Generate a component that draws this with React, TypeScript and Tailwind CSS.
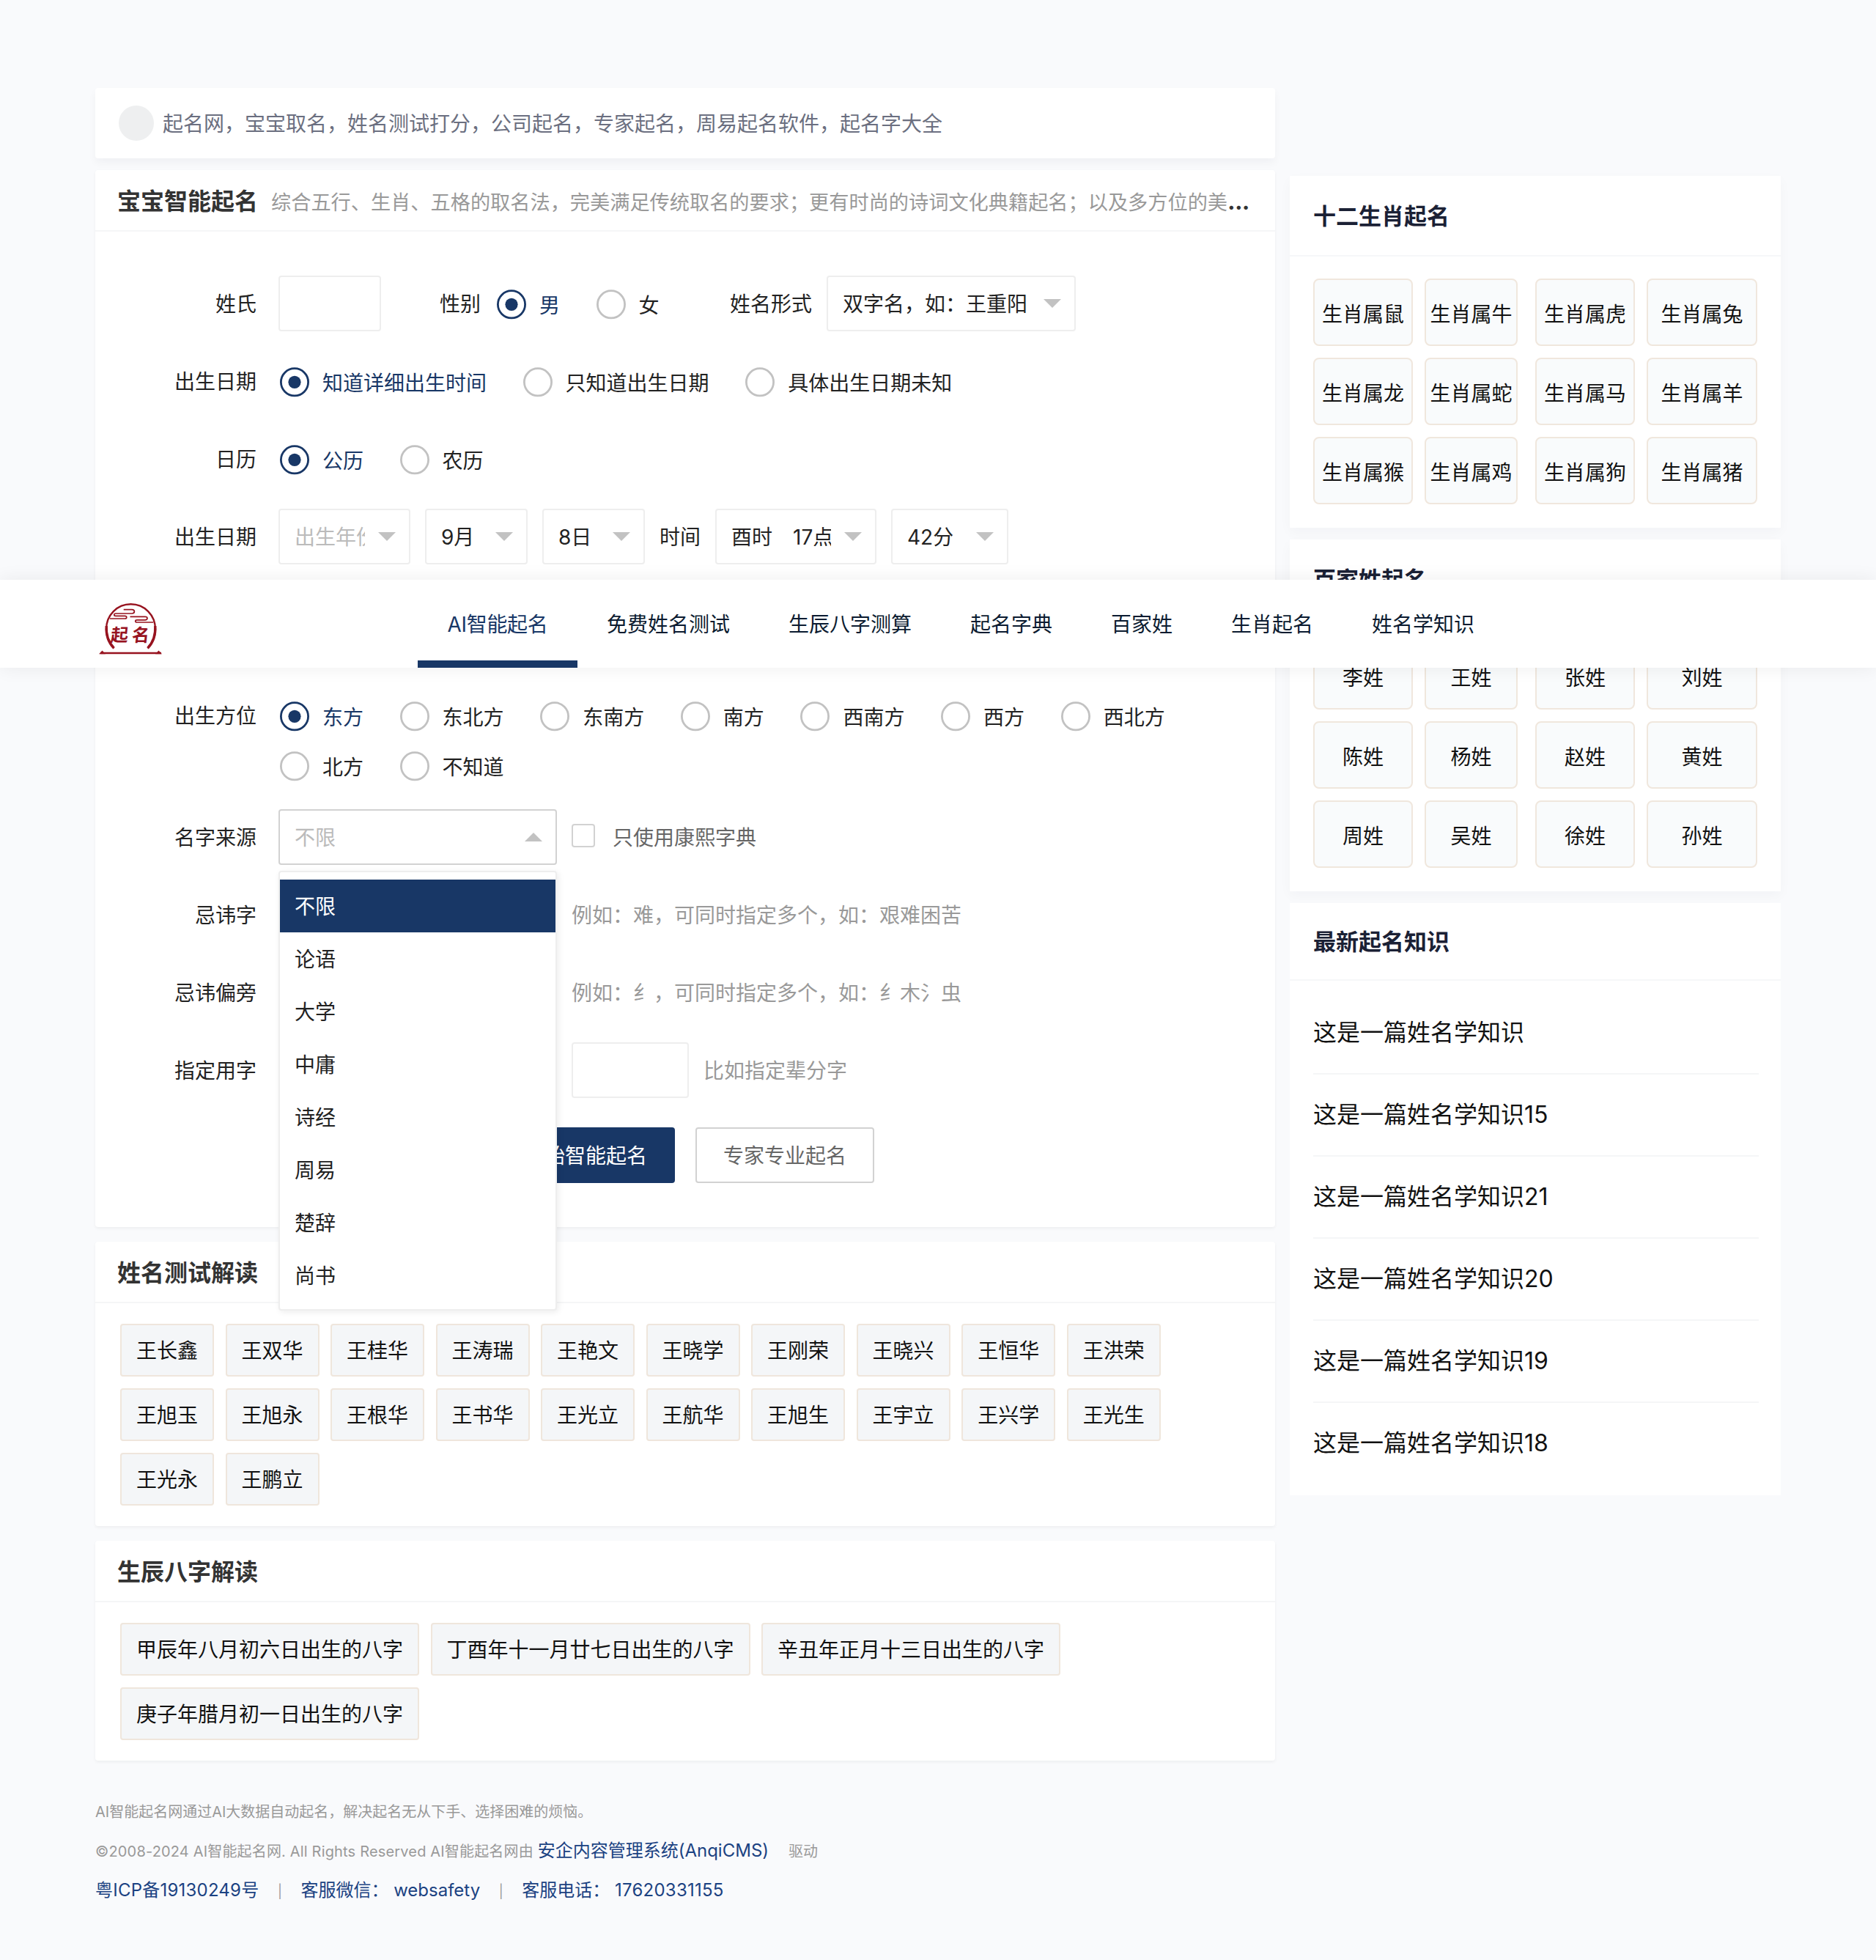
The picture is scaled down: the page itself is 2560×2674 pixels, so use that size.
import type { ReactNode } from "react";

const names = [
  "王长鑫", "王双华", "王桂华", "王涛瑞", "王艳文", "王晓学", "王刚荣", "王晓兴", "王恒华", "王洪荣",
  "王旭玉", "王旭永", "王根华", "王书华", "王光立", "王航华", "王旭生", "王宇立", "王兴学", "王光生",
  "王光永", "王鹏立",
];

const births = [
  "甲辰年八月初六日出生的八字",
  "丁酉年十一月廿七日出生的八字",
  "辛丑年正月十三日出生的八字",
  "庚子年腊月初一日出生的八字",
];

const zodiac = ["鼠", "牛", "虎", "兔", "龙", "蛇", "马", "羊", "猴", "鸡", "狗", "猪"].map((a) => `生肖属${a}`);
const surnames = ["李", "王", "张", "刘", "陈", "杨", "赵", "黄", "周", "吴", "徐", "孙"].map((a) => `${a}姓`);
const sources = ["不限", "论语", "大学", "中庸", "诗经", "周易", "楚辞", "尚书"];
const articles = ["", "15", "21", "20", "19", "18"];
const nav = ["AI智能起名", "免费姓名测试", "生辰八字测算", "起名字典", "百家姓", "生肖起名", "姓名学知识"];

function Radio({ label, checked }: { label: string; checked?: boolean }) {
  return (
    <label className="mr-[47.6px] flex h-[68px] items-center">
      <svg className="mr-4 h-11 w-11" viewBox="0 0 44 44" fill="none">
        <circle cx="22" cy="22.3" r="18.6" stroke={checked ? "#183766" : "#c2c2c2"} strokeWidth="2.8" />
        {checked && <circle cx="22" cy="22.3" r="8.6" fill="#183766" />}
      </svg>
      <span className={checked ? "mt-1 text-[#183766]" : "mt-1"}>{label}</span>
    </label>
  );
}

function Label({ children }: { children: ReactNode }) {
  return <div className="mr-[30px] h-[76px] w-[190px] shrink-0 text-right leading-[78px]">{children}</div>;
}

function Row({ label, children, className = "mb-[30px]" }: { label: string; children?: ReactNode; className?: string }) {
  return (
    <div className={`flex h-[76px] ${className}`}>
      <Label>{label}</Label>
      {children}
    </div>
  );
}

function Arrow({ up }: { up?: boolean }) {
  return (
    <svg className="h-3 w-6 shrink-0" viewBox="0 0 24 12">
      <path d={up ? "M0 12L12 0L24 12Z" : "M0 0H24L12 12Z"} fill="#c2c2c2" />
    </svg>
  );
}

function Select({ width, children, muted }: { width: string; children: ReactNode; muted?: boolean }) {
  return (
    <div className={`flex h-[76px] shrink-0 items-center rounded-[4px] border-2 border-[#eeeeee] bg-white pr-[18px] pl-5 ${width}`}>
      <div className={`mr-[18px] h-[72px] min-w-0 flex-1 overflow-hidden whitespace-pre leading-[74px] ${muted ? "text-[#bbbbbb]" : ""}`}>
        {children}
      </div>
      <Arrow />
    </div>
  );
}

function Card({ title, children, className = "mb-5" }: { title: ReactNode; children: ReactNode; className?: string }) {
  return (
    <section className={`rounded-[4px] bg-white shadow-[0_2px_4px_rgba(0,0,0,0.05)] ${className}`}>
      <h2 className="flex h-[84px] items-center border-b-2 border-[#f5f6f7] pt-[3px] pl-[30px] text-[32px] font-bold text-[#333333]">{title}</h2>
      {children}
    </section>
  );
}

function Tags({ items }: { items: string[] }) {
  return (
    <div className="flex flex-wrap gap-x-[15.5px] gap-y-4 px-[34px] py-7">
      {items.map((t) => (
        <span key={t} className="h-[72px] rounded-[4px] border-2 border-[#efe6dc] bg-[#f4f6f8] px-5 leading-[70px] text-[#111111]">
          {t}
        </span>
      ))}
    </div>
  );
}

function SideTitle({ children, className }: { children: ReactNode; className: string }) {
  return (
    <h2 className={`border-b-2 border-[#f6f7f9] px-8 text-[31px] font-bold text-[#1b2135] ${className}`}>{children}</h2>
  );
}

function Grid({ items }: { items: string[] }) {
  return (
    <div className="grid grid-cols-[136px_152px_135px_151px] gap-x-4 gap-y-4 px-8 pt-[30px] pb-8">
      {items.map((t, i) => (
        <span
          key={t}
          className={`h-[92px] rounded-[8px] border-2 border-[#f0e7dd] bg-[#f9fbfc] text-center leading-[94px] whitespace-nowrap text-[#111111] ${i % 4 === 1 ? "w-[127px]" : ""} ${i % 4 === 2 ? "-ml-[17px] mr-4" : ""} ${i % 4 === 3 ? "-ml-4 mr-4" : ""}`}
        >
          {t}
        </span>
      ))}
    </div>
  );
}

function Logo() {
  return (
    <div className="relative ml-[2px] h-[84px] w-[92px]">
      <svg className="absolute inset-0 h-full w-full" viewBox="0 0 92 84" fill="none" stroke="#97131f">
        <path d="M23.500 68.300C16.500 61 13 52 13 42.500C13 23 28 8.300 46.500 8.300C65 8.300 80 23 80 42.500C80 52 76.500 61 69.500 68.300" strokeWidth="2.400" />
        <path d="M13.200 38C12.500 50 15.500 60 23.500 68.300M79.800 38C80.500 50 77.500 60 69.500 68.300" strokeWidth="3.400" />
        <path d="M36.700 15.700H48C52.500 15.700 52.500 21 48 21H26C23 21 23 24.300 26 24.300H38.500C41.500 24.300 41.500 28 38.500 28H18" strokeWidth="1.700" />
        <path d="M45.500 25.300H66C70 25.300 70 29.800 66 29.800H55C52 29.800 52 33 55 33H77" strokeWidth="1.700" />
        <path d="M5 75H88" strokeWidth="2.400" />
        <path d="M3 76.200L7.500 71.500L12 76.200ZM89 76.200L84.500 71.500L80 76.200Z" fill="#97131f" stroke="none" />
      </svg>
      <span className="absolute top-[37px] left-[19px] -skew-x-6 text-[24px] leading-[28px] font-bold tracking-[5px] text-[#97131f]">起名</span>
    </div>
  );
}

export default function App() {
  return (
    <div
      lang="zh-CN"
      className="relative h-[2674px] w-[2560px] overflow-hidden bg-[#f9fafc] pt-[120px] pl-[130px] text-[28px] text-[#222222] [font-family:Inter,'Noto_Sans_CJK_SC',sans-serif]"
    >
      <div className="flex items-start gap-5">
        <main className="w-[1610px]">
          <div className="mb-4 flex h-24 items-center gap-3 rounded-[4px] bg-white pl-8 text-[#6b6f80] shadow-[0_6px_12px_rgba(0,30,40,0.04)]">
            <span className="h-12 w-12 rounded-full bg-[#eeeff0]" />
            <span className="mt-0.5">起名网，宝宝取名，姓名测试打分，公司起名，专家起名，周易起名软件，起名字大全</span>
          </div>

          <Card
            title={
              <span className="flex items-baseline whitespace-nowrap">
                宝宝智能起名
                <small className="ml-[18px] text-[27.2px] font-normal text-[#999999]">
                  综合五行、生肖、五格的取名法，完美满足传统取名的要求；更有时尚的诗词文化典籍起名；以及多方位的美
                </small>
                <span className="tracking-[-0.8px] [font-family:Inter,sans-serif]">...</span>
              </span>
            }
          >
            <form className="h-[1358px] pt-[60px] pl-[30px]">
              <Row label="姓氏">
                <div className="h-[76px] w-[140px] rounded-[4px] border-2 border-[#eeeeee]" />
                <div className="ml-20 w-14 leading-[78px]">性别</div>
                <div className="mt-[5px] ml-5 flex">
                  <Radio label="男" checked />
                  <Radio label="女" />
                </div>
                <div className="mr-5 ml-[48.8px] leading-[78px]">姓名形式</div>
                <Select width="w-[340px]">双字名，如：王重阳</Select>
              </Row>
              <Row label="出生日期">
                <div className="mt-[5px] flex">
                  <Radio label="知道详细出生时间" checked />
                  <Radio label="只知道出生日期" />
                  <Radio label="具体出生日期未知" />
                </div>
              </Row>
              <Row label="日历">
                <div className="mt-[5px] flex">
                  <Radio label="公历" checked />
                  <Radio label="农历" />
                </div>
              </Row>
              <Row label="出生日期" className="mb-[168px]">
                <div className="flex gap-5">
                  <Select width="w-[180px]" muted>出生年份</Select>
                  <Select width="w-[140px]">9月</Select>
                  <Select width="w-[140px]">8日</Select>
                  <span className="leading-[78px]">时间</span>
                  <Select width="w-[220px]">
                    酉时<span className="ml-[28px]">17点</span>
                  </Select>
                  <Select width="w-[160px]">42分</Select>
                </div>
              </Row>
              <Row label="出生方位" className="mb-[90px]">
                <div className="mt-[5px] flex w-[1300px] flex-wrap content-start">
                  <Radio label="东方" checked />
                  <Radio label="东北方" />
                  <Radio label="东南方" />
                  <Radio label="南方" />
                  <Radio label="西南方" />
                  <Radio label="西方" />
                  <Radio label="西北方" />
                  <Radio label="北方" />
                  <Radio label="不知道" />
                </div>
              </Row>
              <Row label="名字来源">
                <div className="relative h-[76px] w-[380px]">
                  <div className="flex h-full items-center justify-between rounded-[4px] border-2 border-[#d2d2d2] pr-[18px] pl-5 text-[#bbbbbb]">
                    <span className="mt-0.5">不限</span>
                    <Arrow up />
                  </div>
                  <ul className="absolute top-[84px] left-0 z-10 w-[380px] rounded-[4px] border-2 border-[#eeeeee] bg-white py-[10px] shadow-[2px_2px_8px_rgba(0,0,0,0.08)]">
                    {sources.map((s, i) => (
                      <li key={s} className={`h-[72px] pl-5 leading-[74px] ${i === 0 ? "bg-[#183766] text-white" : ""}`}>
                        {s}
                      </li>
                    ))}
                  </ul>
                </div>
                <span className="mt-5 ml-5 h-8 w-8 rounded-[4px] border-2 border-[#d2d2d2]" />
                <span className="ml-6 leading-[78px] text-[#666666]">只使用康熙字典</span>
              </Row>
              <Row label="忌讳字">
                <span className="ml-[400px] leading-[78px] text-[#999999]">例如：难，可同时指定多个，如：艰难困苦</span>
              </Row>
              <Row label="忌讳偏旁">
                <span className="ml-[400px] leading-[78px] text-[#999999]">例如：纟，可同时指定多个，如：纟木氵虫</span>
              </Row>
              <Row label="指定用字" className="mb-10">
                <div className="ml-[400px] h-[76px] w-40 rounded-[4px] border-2 border-[#eeeeee]" />
                <span className="ml-5 leading-[78px] text-[#999999]">比如指定辈分字</span>
              </Row>
              <div className="ml-[517px] flex gap-7 leading-[74px]">
                <div className="h-[76px] w-[244px] rounded-[4px] border-2 border-[#183766] bg-[#183766] text-center text-white">开始智能起名</div>
                <div className="h-[76px] w-[244px] rounded-[4px] border-2 border-[#d2d2d2] bg-white text-center text-[#666666]">专家专业起名</div>
              </div>
            </form>
          </Card>

          <Card title="姓名测试解读">
            <Tags items={names} />
          </Card>

          <Card title="生辰八字解读" className="">
            <Tags items={births} />
          </Card>

          <footer className="mt-[43px] text-[20px] text-[#999999]">
            <p className="h-[53px] leading-[54px]">AI智能起名网通过AI大数据自动起名，解决起名无从下手、选择困难的烦恼。</p>
            <p className="flex h-[53px] items-baseline leading-[53px] whitespace-pre">
              <span className="tracking-[0.17px]">©2008-2024 AI智能起名网. All Rights Reserved AI智能起名网由 </span>
              <a className="text-[24px] text-[#1b4282]">安企内容管理系统(AnqiCMS)</a>
              <span className="ml-[27px]">驱动</span>
            </p>
            <p className="flex h-[53px] items-baseline leading-[55px] whitespace-pre">
              <a className="text-[24px] tracking-[0.22px] text-[#1b4282]">粤ICP备19130249号</a>
              <span className="mx-[25.5px] text-[18px]">|</span>
              <a className="text-[24px] text-[#1b4282]">客服微信： websafety</a>
              <span className="mx-[25.5px] text-[18px]">|</span>
              <a className="text-[24px] text-[#1b4282]">
                客服电话： <span className="tracking-[0.25px]">17620331155</span>
              </a>
            </p>
          </footer>
        </main>

        <aside className="mt-[120px] flex w-[670px] flex-col gap-4">
          <section className="h-[480px] bg-white shadow-[0_6px_16px_rgba(0,20,60,0.03)]">
            <SideTitle className="h-[110px] leading-[110px]">十二生肖起名</SideTitle>
            <Grid items={zodiac} />
          </section>
          <section className="h-[480px] bg-white shadow-[0_6px_16px_rgba(0,20,60,0.03)]">
            <SideTitle className="h-[110px] leading-[109px]">百家姓起名</SideTitle>
            <Grid items={surnames} />
          </section>
          <section className="h-[808px] bg-white">
            <SideTitle className="h-[106px] leading-[106px]">最新起名知识</SideTitle>
            <ul className="mr-[30px] ml-8 pt-4">
              {articles.map((n) => (
                <li key={n} className="h-[112px] border-b-2 border-[#f5f6f7] text-[32px] leading-[110px] text-[#111111] last:border-transparent">
                  这是一篇姓名学知识{n}
                </li>
              ))}
            </ul>
          </section>
        </aside>
      </div>

      <header className="absolute top-[791px] left-0 z-20 flex h-[120px] w-full bg-white pl-[130px] shadow-[0_0_24px_rgba(0,0,0,0.07)]">
        <div className="w-[440px] pt-[25px]">
          <Logo />
        </div>
        <nav className="flex">
          {nav.map((n, i) => (
            <a
              key={n}
              className={`flex h-[120px] items-center whitespace-nowrap ${i === 0 ? "w-[218px] justify-center border-b-[10px] border-[#183766] pt-[11px] tracking-[-0.3px] text-[#183766]" : "px-10 pt-px text-[#0b1b30]"}`}
            >
              {n}
            </a>
          ))}
        </nav>
      </header>
    </div>
  );
}
